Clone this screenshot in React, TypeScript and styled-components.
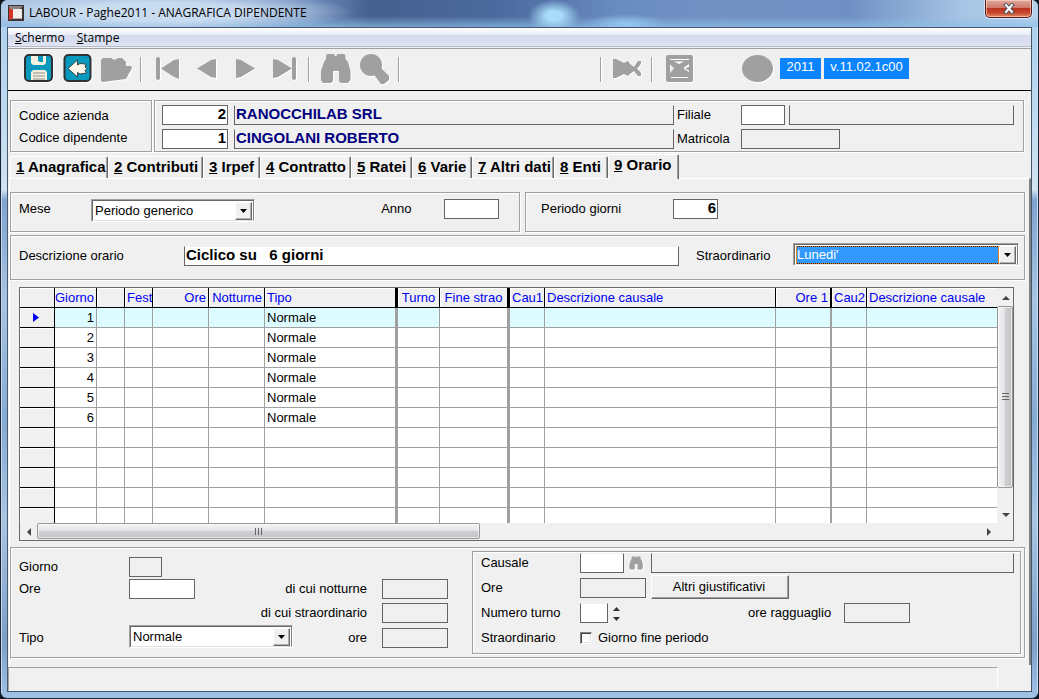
import React from "react";
import styled, { createGlobalStyle, css } from "styled-components";

const GlobalStyle = createGlobalStyle`
  * { box-sizing: border-box; }
  body {
    margin: 0;
    background: #10161f;
    color: #000;
    font: 13px/16px "Liberation Sans", Arial, sans-serif;
  }
  button, input, select { font: inherit; color: inherit; margin: 0; border-radius: 0; }
`;

/* ---------- window frame ---------- */

const Window = styled.div`
  display: flex;
  flex-direction: column;
  min-height: 100vh;
  padding: 0 6px 6px;
  border: 1px solid #1a2432;
  border-top: 0;
  border-radius: 7px;
  background:
    linear-gradient(#c3d8ee, #c3d8ee) 0 0 / 1px 100% no-repeat,
    linear-gradient(#c3e4f8, #c3e4f8) 100% 0 / 1px 100% no-repeat,
    linear-gradient(#a9cdec, #bfdaf0 120px, #d3e3f1 190px, #7fa3cf 200px, #a8c4e2 300px, #86abd4 420px, #a9c5e2 520px, #7d9fc8 640px, #9fc2e4);
`;

const TitleBar = styled.header`
  display: flex;
  align-items: flex-start;
  height: 27px;
  margin: 0 -6px;
  padding-left: 7px;
  border-radius: 7px 7px 0 0;
  font: 12px/16px "Open Sans", "Noto Sans", sans-serif;
  background:
    radial-gradient(ellipse 26px 16px at 553px 16px, #a8dcf9 30%, rgba(168, 220, 249, 0)),
    radial-gradient(ellipse 40px 10px at 625px 24px, #93c8f0, rgba(147, 200, 240, 0)),
    radial-gradient(ellipse 190px 20px at 165px 12px, rgba(214, 230, 246, 0.8) 45%, rgba(190, 210, 235, 0)),
    linear-gradient(rgba(150, 200, 235, 0) 60%, rgba(140, 190, 230, 0.7)),
    linear-gradient(90deg, #aac4e2, #8dabd2 200px, #6d8cba 310px, #45608f 370px, #4c6a9e 500px, #6a8cc2 620px, #7392c4 720px, #6f90c4 850px, #a6c4e4 960px, #b4d2ec);
`;

const TitleText = styled.h1`
  flex: 1;
  margin: 5px 0 0 5px;
  font: inherit;
`;

const AppIcon = styled.svg`
  width: 16px;
  height: 16px;
  margin-top: 5px;
`;

const CloseButton = styled.button`
  display: flex;
  align-items: center;
  justify-content: center;
  width: 47px;
  height: 18px;
  margin-right: 6px;
  padding: 0;
  border: 1px solid #5a1a18;
  border-top: 0;
  border-radius: 0 0 5px 5px;
  background: linear-gradient(#e0a89c, #cf7a6b 45%, #b93420 50%, #c8482c 75%, #e08a62);
  box-shadow: inset 0 0 0 1px rgba(255, 220, 210, 0.6), 0 0 0 1px rgba(230, 240, 250, 0.7);
`;

const Client = styled.div`
  display: flex;
  flex: 1;
  flex-direction: column;
  border: 1px solid #46586c;
  background: #f0f0f0;
`;

/* ---------- menu and toolbar ---------- */

const MenuBar = styled.nav`
  display: flex;
  gap: 12px;
  height: 21px;
  padding-left: 7px;
  border-bottom: 1px solid #a0a0a0;
  font: 12px/20px "Open Sans", "Noto Sans", sans-serif;
  background: linear-gradient(#fff, #e7ebf5 7px, #d4daed 7px, #dfe4f4 18px, #b6bccc 18px, #b6bccc 19px, #f0f0f0 19px);
`;

const MenuItem = styled.button`
  padding: 0;
  border: 0;
  background: none;
`;

const Toolbar = styled.div`
  display: flex;
  align-items: flex-start;
  height: 42px;
  padding: 3px 0 0 11px;
  border-bottom: 1px solid #000;
`;

const ToolButton = styled.button`
  flex: none;
  width: 39px;
  height: 34px;
  padding: 0;
  border: 0;
  background: none;
  color: #a0a0a0;
  svg { display: block; filter: drop-shadow(1px 1px 0 #fff); }
`;

const Separator = styled.span`
  flex: none;
  width: 12px;
  height: 25px;
  margin-top: 5px;
  background: linear-gradient(90deg, #a0a0a0 1px, #fff 1px, #fff 2px, transparent 2px) 4px 0 no-repeat;
`;

const ToolGroup = styled.div<{ $start?: number }>`
  display: flex;
  flex: none;
  margin-left: ${(p) => p.$start ?? 0}px;
`;

const Tag = styled.span<{ $wide?: boolean }>`
  width: ${(p) => (p.$wide ? 85 : 41)}px;
  height: 21px;
  margin: 6px 0 0 3px;
  background: #0a84ff;
  color: #fff;
  font-size: 13px;
  line-height: 18px;
  text-align: center;
`;

const Glyph = ({ children }: { children: React.ReactNode }) => (
  <svg width="39" height="34" viewBox="0 0 39 34" fill="currentColor" aria-hidden="true">
    {children}
  </svg>
);

/* ---------- boxes, labels, fields ---------- */

const etched = css`
  border: 1px solid #a0a0a0;
  box-shadow: 1px 1px 0 #fff, inset 1px 1px 0 #fff;
`;

const Main = styled.main`
  padding-top: 9px;
`;

const KeyRow = styled.section`
  display: grid;
  grid-template-columns: 142px minmax(0, 1fr);
  gap: 2px;
  margin: 0 7px 2px 2px;
`;

const KeyLabels = styled.div`
  ${etched}
  display: grid;
  grid-template-rows: 22px 22px;
  align-items: center;
  height: 52px;
  padding: 4px 8px;
`;

const KeyFields = styled.div`
  ${etched}
  display: grid;
  grid-template-columns: 66px minmax(0, 446fr) 67px 44px minmax(0, 229fr);
  grid-template-rows: 20px 20px;
  row-gap: 4px;
  height: 52px;
  padding: 4px 9px 0 7px;
`;

const Label = styled.label<{ $right?: boolean; $width?: number }>`
  flex: none;
  width: ${(p) => (p.$width ? `${p.$width}px` : "auto")};
  line-height: 20px;
  text-align: ${(p) => (p.$right ? "right" : "left")};
  white-space: pre;
`;

const Field = styled.input<{
  $width?: number;
  $locked?: boolean;
  $open?: boolean;
  $right?: boolean;
  $navy?: boolean;
}>`
  display: block;
  flex: ${(p) => (p.$width ? "none" : "1")};
  width: ${(p) => (p.$width ? `${p.$width}px` : "100%")};
  min-width: 0;
  height: 20px;
  padding: 0 1px 3px;
  border: 1px solid #646464;
  ${(p) => p.$open && "border-top-color: transparent;"}
  background: ${(p) => (p.$locked ? "#f0f0f0" : "#fff")};
  background-clip: padding-box;
  color: ${(p) => (p.$navy ? "#000080" : "#000")};
  font-size: 15px;
  line-height: 15px;
  font-weight: bold;
  text-align: ${(p) => (p.$right ? "right" : "left")};
  outline: 0;
`;

const Gap = styled.div<{ $left?: number; $span?: number }>`
  display: flex;
  padding-left: ${(p) => p.$left ?? 0}px;
  grid-column: span ${(p) => p.$span ?? 1};
`;

const SelectShell = styled.span<{ $width: number }>`
  position: relative;
  flex: none;
  width: ${(p) => p.$width}px;
  height: 23px;
  border: 1px solid;
  border-color: #a0a0a0 #fff #fff #a0a0a0;
`;

const SelectBox = styled.select<{ $active?: boolean }>`
  appearance: none;
  display: block;
  width: 100%;
  height: 21px;
  padding: 1px 20px 0 2px;
  border: 1px solid;
  border-color: #696969 #808080 #e3e3e3 #696969;
  outline: 0;
  background: #fff;
  ${(p) =>
    p.$active &&
    css`
      color: #fff;
      background: linear-gradient(#39f, #39f) 2px 2px / calc(100% - 21px) 16px no-repeat,
        repeating-linear-gradient(90deg, #e08020 0 1px, #202020 1px 2px) 1px 1px / calc(100% - 19px) 18px no-repeat,
        #fff;
    `}
`;

const SelectArrow = styled.span`
  position: absolute;
  top: 2px;
  right: 2px;
  display: flex;
  align-items: center;
  justify-content: center;
  width: 17px;
  height: 18px;
  border: 1px solid;
  border-color: #fff #696969 #696969 #fff;
  box-shadow: inset -1px -1px 0 #b0b0b0;
  background: #f0f0f0;
  pointer-events: none;
`;

function Select(props: { id: string; width: number; value: string; active?: boolean }) {
  return (
    <SelectShell $width={props.width}>
      <SelectBox id={props.id} $active={props.active} defaultValue={props.value}>
        <option>{props.value}</option>
      </SelectBox>
      <SelectArrow>
        <svg width="7" height="4" aria-hidden="true">
          <path d="M0 0H7L3.5 4Z" />
        </svg>
      </SelectArrow>
    </SelectShell>
  );
}

/* ---------- tabs ---------- */

const TabList = styled.div`
  display: flex;
  align-items: flex-end;
  height: 24px;
  padding-left: 2px;
`;

const Tab = styled.button<{ $width: number; $selected?: boolean }>`
  flex: none;
  width: ${(p) => p.$width}px;
  height: ${(p) => (p.$selected ? 25 : 22)}px;
  margin-bottom: ${(p) => (p.$selected ? -1 : 0)}px;
  padding: 0 0 ${(p) => (p.$selected ? 5 : 1)}px 5px;
  border: 1px solid;
  border-color: #fff #696969 transparent #fff;
  border-bottom: 0;
  border-radius: 2px 2px 0 0;
  box-shadow: inset -1px 0 0 #a0a0a0;
  background: #f0f0f0;
  font-size: 15px;
  line-height: 20px;
  font-weight: bold;
  text-align: left;
  white-space: nowrap;
`;

const TabPanel = styled.div`
  margin-left: 1px;
  padding: 13px 4px 7px 0;
  border: 1px solid #fff;
  border-bottom: 0;
  border-right: 2px solid #808080;
`;

const FilterRow = styled.div`
  display: grid;
  grid-template-columns: minmax(0, 510fr) minmax(0, 500fr);
  gap: 5px;
`;

const FilterBox = styled.div<{ $left?: number }>`
  ${etched}
  display: flex;
  height: 40px;
  padding: 6px 0 0 ${(p) => p.$left ?? 8}px;
`;

const DescriptionBox = styled.div`
  ${etched}
  display: flex;
  height: 45px;
  margin-top: 3px;
  padding: 7px 5px 0 8px;
`;

const Drop = styled.div<{ $grow?: boolean; $left?: number }>`
  display: flex;
  flex: ${(p) => (p.$grow ? "1" : "none")};
  min-width: 0;
  margin-left: ${(p) => p.$left ?? 0}px;
  padding-top: 3px;
`;

/* ---------- grid ---------- */

const GridFrame = styled.div`
  display: grid;
  grid-template-columns: minmax(0, 1fr) 16px;
  grid-template-rows: 235px 17px;
  margin: 7px 11px 0 9px;
  border: 1px solid #696969;
`;

const GridView = styled.div`
  overflow: hidden;
  background: #fff;
`;

const Table = styled.table`
  width: 100%;
  table-layout: fixed;
  border-collapse: separate;
  border-spacing: 0;
`;

const HeadCell = styled.th<{ $rule: number; $align?: string }>`
  height: 20px;
  padding: 0 ${(p) => (p.$align === "right" ? 2 : 0)}px 0 ${(p) => (p.$align ? 0 : 2)}px;
  overflow: hidden;
  border-right: ${(p) => p.$rule}px solid #000;
  border-bottom: 1px solid #000;
  background: #f0f0f0;
  box-shadow: inset 1px 1px 0 #fff;
  color: #0000f0;
  font-weight: normal;
  line-height: 19px;
  text-align: ${(p) => p.$align ?? "left"};
  white-space: nowrap;
`;

const RowHead = styled.th`
  height: 20px;
  padding: 0 3px 0 0;
  border-right: 1px solid #000;
  border-bottom: 1px solid #000;
  background: #f0f0f0;
  box-shadow: inset 1px 1px 0 #fff;
  svg { display: block; margin: 0 auto; }
`;

const Cell = styled.td<{ $rule: number; $current: boolean; $align?: string }>`
  height: 20px;
  padding: 0 2px;
  border-right: ${(p) => p.$rule}px solid #a0a0a0;
  border-bottom: 1px solid #a0a0a0;
  background: ${(p) => (p.$current ? "#dcfcff" : "#fff")};
  line-height: 19px;
  text-align: ${(p) => p.$align ?? "left"};
`;

const ScrollBar = styled.div<{ $vertical?: boolean }>`
  display: flex;
  flex-direction: ${(p) => (p.$vertical ? "column" : "row")};
  padding: ${(p) => (p.$vertical ? "1px 0 0" : "0 0 1px")};
  background: #f0f0f0;
`;

const ScrollArrow = styled.button`
  display: flex;
  flex: none;
  align-items: center;
  justify-content: center;
  width: 17px;
  height: 17px;
  padding: 0;
  border: 0;
  background: none;
`;

const Thumb = styled.div<{ $vertical?: boolean; $share: number }>`
  display: flex;
  align-items: center;
  justify-content: center;
  flex: 0 0 ${(p) => p.$share}%;
  border: 1px solid #979797;
  border-radius: 2px;
  box-shadow: inset 0 0 0 1px rgba(255, 255, 255, 0.6);
  background: linear-gradient(${(p) => (p.$vertical ? "90deg" : "180deg")}, #f3f3f3, #e6e6e8 45%, #d0d1d4 50%, #c2c3c6);
`;

const Track = styled.div<{ $vertical?: boolean }>`
  display: flex;
  flex: 1;
  flex-direction: ${(p) => (p.$vertical ? "column" : "row")};
`;

const ArrowMark = ({ d }: { d: string }) => (
  <svg width="8" height="8" viewBox="0 0 8 8" fill="#444" aria-hidden="true">
    <path d={d} />
  </svg>
);

/* ---------- detail form ---------- */

const DetailBox = styled.section`
  ${etched}
  display: grid;
  grid-template-columns: 461px minmax(0, 1fr);
  height: 111px;
  margin-top: 6px;
  padding: 3px 3px 3px 0;
`;

const DetailLeft = styled.div`
  display: grid;
  grid-template-columns: 110px 164px 74px 15px 66px;
  grid-template-rows: 22px 24px 22px 24px;
  padding: 6px 0 0 8px;
`;

const LabelCell = styled.div<{ $right?: boolean; $span?: number }>`
  display: flex;
  justify-content: ${(p) => (p.$right ? "flex-end" : "flex-start")};
  grid-column: span ${(p) => p.$span ?? 1};
`;

const DetailRight = styled.div`
  ${etched}
  display: grid;
  grid-template-columns: 99px minmax(0, 1fr);
  grid-template-rows: 22px 28px 25px 22px;
  padding: 1px 6px 0 8px;
`;

const Line = styled.div`
  display: flex;
  min-width: 0;
`;

const PushButton = styled.button`
  width: 138px;
  height: 24px;
  margin-left: 5px;
  padding: 0 2px 1px 0;
  border: 1px solid;
  border-color: #fff #696969 #696969 #fff;
  box-shadow: inset -1px -1px 0 #a0a0a0;
  background: #f0f0f0;
`;

const SearchButton = styled.button`
  width: 27px;
  height: 20px;
  padding: 0 0 0 5px;
  border: 0;
  background: none;
  svg { display: block; filter: drop-shadow(1px 1px 0 #fff); }
`;

const Spinner = styled.span`
  display: flex;
  flex-direction: column;
  width: 17px;
  button { display: flex; align-items: center; justify-content: center; width: 17px; height: 10px; padding: 2px 0 0; border: 0; background: none; }
`;

const CheckBox = styled.input`
  appearance: none;
  width: 12px;
  height: 12px;
  margin: 4px 6px 0 0;
  border: 1px solid;
  border-color: #808080 #fff #fff #808080;
  box-shadow: inset 1px 1px 0 #404040, inset -1px -1px 0 #e3e3e3;
  background: #fff;
`;

const StatusBar = styled.footer`
  flex: 1;
  min-height: 23px;
  margin: 2px 33px 0 0;
  border: 1px solid;
  border-color: #a0a0a0 #fff transparent #a0a0a0;
`;

/* ---------- data ---------- */

const tabs = [
  { key: "1", text: "Anagrafica", width: 98 },
  { key: "2", text: "Contributi", width: 95 },
  { key: "3", text: "Irpef", width: 57 },
  { key: "4", text: "Contratto", width: 91 },
  { key: "5", text: "Ratei", width: 61 },
  { key: "6", text: "Varie", width: 60 },
  { key: "7", text: "Altri dati", width: 82 },
  { key: "8", text: "Enti", width: 54 },
  { key: "9", text: "Orario", width: 71 },
];

type Column = { title: string; width?: number; rule: number; align?: string };

const columns: Column[] = [
  { title: "Giorno", width: 42, rule: 1, align: "right" },
  { title: "", width: 28, rule: 1 },
  { title: "Fest", width: 28, rule: 1 },
  { title: "Ore", width: 56, rule: 1, align: "right" },
  { title: "Notturne", width: 56, rule: 1, align: "right" },
  { title: "Tipo", width: 133, rule: 3 },
  { title: "Turno", width: 42, rule: 1, align: "center" },
  { title: "Fine strao", width: 70, rule: 3, align: "center" },
  { title: "Cau1", width: 35, rule: 1 },
  { title: "Descrizione causale", width: 231, rule: 1 },
  { title: "Ore 1", width: 56, rule: 2, align: "right" },
  { title: "Cau2", width: 35, rule: 1 },
  { title: "Descrizione causale", rule: 0 },
];

const rows = Array.from({ length: 11 }, (_, i) => (i < 6 ? String(i + 1) : ""));

const binoculars =
  "M10 4L11 2H18L19 4H20.5L21.5 2H28.500L29.500 4V7L32 10L34.500 19V28L32 31H25L23 29V19H17V29L15 31H7L5 28V19L8 10L10 7Z";

export default function App() {
  return (
    <>
      <GlobalStyle />
      <Window>
        <TitleBar>
          <AppIcon viewBox="0 0 16 16" aria-hidden="true">
            <rect width="16" height="16" fill="#3c3434" />
            <path d="M1 1H15L11 5H1Z" fill="#8a8484" />
            <path d="M1 3L5 5V13L2 15H1Z" fill="#d83228" />
            <rect x="5" y="4" width="9" height="9" fill="#f3eeee" />
            <path d="M3 14L5 13H14V14Z" fill="#b8a8a8" />
          </AppIcon>
          <TitleText>LABOUR - Paghe2011 - ANAGRAFICA DIPENDENTE</TitleText>
          <CloseButton aria-label="Chiudi">
            <svg width="12" height="11" viewBox="0 0 12 11" aria-hidden="true">
              <path d="M3 2L9 9M9 2L3 9" stroke="#4a4e5c" strokeWidth="4" strokeLinecap="square" />
              <path d="M3 2L9 9M9 2L3 9" stroke="#fff" strokeWidth="2" strokeLinecap="square" />
            </svg>
          </CloseButton>
        </TitleBar>
        <Client>
          <MenuBar>
            <MenuItem><u>S</u>chermo</MenuItem>
            <MenuItem><u>S</u>tampe</MenuItem>
          </MenuBar>
          <Toolbar>
            <ToolButton aria-label="Salva">
              <Glyph>
                <rect x="6" y="3" width="27" height="26" rx="4" fill="#0899bd" stroke="#2d3236" strokeWidth="2" />
                <path d="M12 4H27V11L25 13H14L12 11Z" fill="#f4f0e0" />
                <path d="M19 4H24V10H21L19 9Z" fill="#0899bd" />
                <path d="M12 20L14 18H26L28 20V28H12Z" fill="#f4f0e0" />
                <path d="M14 21H26M14 24H26M14 27H26" stroke="#8a8f90" />
              </Glyph>
            </ToolButton>
            <ToolButton aria-label="Esci">
              <Glyph>
                <rect x="6.500" y="3" width="26" height="26" rx="4" fill="#0899bd" stroke="#2d3236" strokeWidth="2" />
                <path d="M10 16.500L19.500 8V13L22 11.500L28 12L27 15L29 16.500L27 18.500L28.500 21L22 22L19.500 20.500V25Z" fill="#fbf7ea" stroke="#38464c" />
              </Glyph>
            </ToolButton>
            <ToolButton aria-label="Apri">
              <Glyph>
                <path d="M4 8L6 6H14L16 7.500H19L21 6H25L29 10V14H34L35 16L29 27L21 28L6 30L4 29Z" />
              </Glyph>
            </ToolButton>
            <Separator />
            <ToolButton aria-label="Primo">
              <Glyph>
                <rect x="8" y="5" width="4" height="23" rx="2" />
                <path d="M13 16.500L26 8L31 7V27L26 25Z" />
              </Glyph>
            </ToolButton>
            <ToolButton aria-label="Precedente">
              <Glyph><path d="M10 16.500L24 8L29 7V26L24 25Z" /></Glyph>
            </ToolButton>
            <ToolButton aria-label="Successivo">
              <Glyph><path d="M10 7L15 8L29 16.500L15 25L10 26Z" /></Glyph>
            </ToolButton>
            <ToolButton aria-label="Ultimo">
              <Glyph>
                <path d="M8 7L13 8L27 16.500L13 25L8 26Z" />
                <rect x="27" y="5" width="4" height="23" rx="2" />
              </Glyph>
            </ToolButton>
            <Separator />
            <ToolButton aria-label="Cerca">
              <Glyph><path d={binoculars} /></Glyph>
            </ToolButton>
            <ToolButton aria-label="Zoom">
              <Glyph>
                <circle cx="16" cy="13" r="11" />
                <path d="M17 20L25 15L34 24V28L29 32H26Z" />
              </Glyph>
            </ToolButton>
            <Separator />
            <ToolGroup $start={190}>
              <Separator />
              <ToolButton aria-label="Annulla">
                <Glyph>
                  <path d="M5 7H8L16 11L18 10L20 9L22 12L26 15L30 9H33V12L29 16.500L33 21V24H30L26 19L22 22L20 24L16 22L8 26H5Z" />
                </Glyph>
              </ToolButton>
              <Separator />
              <ToolButton aria-label="Esporta">
                <Glyph>
                  <rect x="7" y="3" width="27" height="27" rx="2" />
                  <path d="M11 7.500H30M12 25.500H29" stroke="#fff" />
                  <path d="M15 9.500L20 12L25 9.500Z" fill="#fff" />
                  <path d="M11 12V21L15 16.500Z" fill="#f0f0f0" />
                  <path d="M30 12V15L26 16.500L30 18.500V20L25 17V15.500Z" fill="#fff" />
                </Glyph>
              </ToolButton>
            </ToolGroup>
            <ToolGroup $start={40}>
              <ToolButton aria-label="Stato">
                <Glyph><ellipse cx="19.500" cy="16.500" rx="15.500" ry="13.500" /></Glyph>
              </ToolButton>
              <Tag>2011</Tag>
              <Tag $wide>v.11.02.1c00</Tag>
            </ToolGroup>
          </Toolbar>

          <Main>
            <KeyRow>
              <KeyLabels>
                <Label htmlFor="azienda">Codice azienda</Label>
                <Label htmlFor="dipendente">Codice dipendente</Label>
              </KeyLabels>
              <KeyFields>
                <Field id="azienda" $right defaultValue="2" />
                <Gap $left={6}><Field aria-label="Ragione sociale" $locked $open $navy readOnly value="RANOCCHILAB SRL" /></Gap>
                <Gap $left={3}><Label htmlFor="filiale">Filiale</Label></Gap>
                <Field id="filiale" />
                <Gap $left={4}><Field aria-label="Descrizione filiale" $locked $open readOnly /></Gap>
                <Field id="dipendente" $right defaultValue="1" />
                <Gap $left={6}><Field aria-label="Nome dipendente" $locked $open $navy readOnly value="CINGOLANI ROBERTO" /></Gap>
                <Gap $left={3}><Label htmlFor="matricola">Matricola</Label></Gap>
                <Gap $span={2}><Field id="matricola" $width={99} $locked readOnly /></Gap>
              </KeyFields>
            </KeyRow>

            <TabList role="tablist">
              {tabs.map((t) => (
                <Tab key={t.key} role="tab" aria-selected={t.key === "9"} $width={t.width} $selected={t.key === "9"}>
                  <u>{t.key}</u> {t.text}
                </Tab>
              ))}
            </TabList>

            <TabPanel role="tabpanel">
              <FilterRow>
                <FilterBox>
                  <Label htmlFor="mese" $width={72}>Mese</Label>
                  <Select id="mese" width={164} value="Periodo generico" />
                  <Label htmlFor="anno" $width={189} $right>{"Anno         "}</Label>
                  <Field id="anno" $width={55} />
                </FilterBox>
                <FilterBox $left={15}>
                  <Label htmlFor="giorni" $width={132}>Periodo giorni</Label>
                  <Field id="giorni" $width={45} $right defaultValue="6" />
                </FilterBox>
              </FilterRow>

              <DescriptionBox>
                <Drop><Label htmlFor="descrizione" $width={165}>Descrizione orario</Label></Drop>
                <Drop $grow><Field id="descrizione" $open defaultValue="Ciclico su   6 giorni" /></Drop>
                <Drop $left={17}><Label htmlFor="straordinario" $width={97}>Straordinario</Label></Drop>
                <Select id="straordinario" width={226} value="Lunedi'" active />
              </DescriptionBox>

              <GridFrame>
                <GridView>
                  <Table>
                    <colgroup>
                      <col width={35} />
                      {columns.map((c, i) => <col key={i} width={c.width} />)}
                    </colgroup>
                    <thead>
                      <tr>
                        <HeadCell $rule={1} />
                        {columns.map((c, i) => (
                          <HeadCell key={i} $rule={c.rule} $align={c.align}>{c.title}</HeadCell>
                        ))}
                      </tr>
                    </thead>
                    <tbody>
                      {rows.map((day, r) => (
                        <tr key={r}>
                          <RowHead>
                            {r === 0 && (
                              <svg width="6" height="9" aria-hidden="true">
                                <path d="M0 0L6 4.500L0 9Z" fill="#0000f0" />
                              </svg>
                            )}
                          </RowHead>
                          {columns.map((c, i) => (
                            <Cell key={i} $rule={c.rule} $align={c.align} $current={r === 0 && c.title !== "Fine strao"}>
                              {c.title === "Giorno" ? day : c.title === "Tipo" && day ? "Normale" : ""}
                            </Cell>
                          ))}
                        </tr>
                      ))}
                    </tbody>
                  </Table>
                </GridView>
                <ScrollBar $vertical>
                  <ScrollArrow aria-label="Su"><ArrowMark d="M0 6L4 2L8 6Z" /></ScrollArrow>
                  <Track $vertical>
                    <Thumb $vertical $share={91}>
                      <svg width="7" height="8" aria-hidden="true"><path d="M0 .5H7M0 3.500H7M0 6.500H7" stroke="#666" /></svg>
                    </Thumb>
                  </Track>
                  <ScrollArrow aria-label="Giu"><ArrowMark d="M0 2L4 6L8 2Z" /></ScrollArrow>
                </ScrollBar>
                <ScrollBar>
                  <ScrollArrow aria-label="Sinistra"><ArrowMark d="M6 0L2 4L6 8Z" /></ScrollArrow>
                  <Track>
                    <Thumb $share={47}>
                      <svg width="8" height="7" aria-hidden="true"><path d="M.5 0V7M3.500 0V7M6.500 0V7" stroke="#666" /></svg>
                    </Thumb>
                  </Track>
                  <ScrollArrow aria-label="Destra"><ArrowMark d="M2 0L6 4L2 8Z" /></ScrollArrow>
                </ScrollBar>
              </GridFrame>

              <DetailBox>
                <DetailLeft>
                  <Label htmlFor="d-giorno">Giorno</Label>
                  <Gap $span={4}><Field id="d-giorno" $width={33} $locked readOnly /></Gap>
                  <Label htmlFor="d-ore">Ore</Label>
                  <Field id="d-ore" $width={66} />
                  <LabelCell $right><Label htmlFor="d-notturne">di cui notturne</Label></LabelCell>
                  <span />
                  <Field id="d-notturne" $width={66} $locked readOnly />
                  <LabelCell $right $span={3}><Label htmlFor="d-straord">di cui straordinario</Label></LabelCell>
                  <span />
                  <Field id="d-straord" $width={66} $locked readOnly />
                  <Drop><Label htmlFor="d-tipo">Tipo</Label></Drop>
                  <Select id="d-tipo" width={164} value="Normale" />
                  <LabelCell $right><Drop><Label htmlFor="d-ore2">ore</Label></Drop></LabelCell>
                  <span />
                  <Drop><Field id="d-ore2" $width={66} $locked readOnly /></Drop>
                </DetailLeft>

                <DetailRight>
                  <Label htmlFor="causale">Causale</Label>
                  <Line>
                    <Field id="causale" $width={44} $open />
                    <SearchButton aria-label="Cerca causale">
                      <svg width="14" height="14" viewBox="4 1 31 31" fill="#a0a0a0"><path d={binoculars} /></svg>
                    </SearchButton>
                    <Field aria-label="Descrizione causale" $locked $open readOnly />
                  </Line>
                  <Drop><Label htmlFor="c-ore">Ore</Label></Drop>
                  <Line>
                    <Drop><Field id="c-ore" $width={66} $locked readOnly /></Drop>
                    <PushButton>Altri giustificativi</PushButton>
                  </Line>
                  <Label htmlFor="turno">Numero turno</Label>
                  <Line>
                    <Field id="turno" $width={28} $open />
                    <Spinner>
                      <button aria-label="Aumenta"><svg width="7" height="4" fill="#333"><path d="M0 4L3.500 0L7 4Z" /></svg></button>
                      <button aria-label="Riduci"><svg width="7" height="4" fill="#333"><path d="M0 0L3.500 4L7 0Z" /></svg></button>
                    </Spinner>
                    <Gap $left={123}><Label htmlFor="ragguaglio" $width={96}>ore ragguaglio</Label></Gap>
                    <Field id="ragguaglio" $width={66} $locked readOnly />
                  </Line>
                  <Label as="span">Straordinario</Label>
                  <Line>
                    <CheckBox id="fine" type="checkbox" />
                    <Label htmlFor="fine">Giorno fine periodo</Label>
                  </Line>
                </DetailRight>
              </DetailBox>
            </TabPanel>
          </Main>
          <StatusBar />
        </Client>
      </Window>
    </>
  );
}
